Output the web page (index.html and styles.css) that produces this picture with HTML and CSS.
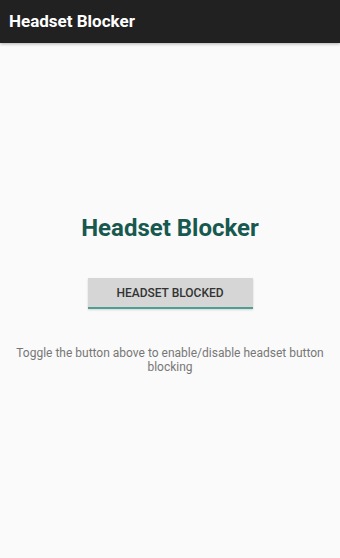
FILE: index.html
```html
<!DOCTYPE html>
<html>
<head>
<meta charset="utf-8">
<link rel="stylesheet" href="styles.css">
</head>
<body>
<header class="appbar"><span class="appbar-title">Headset Blocker</span></header>
<main class="content">
  <h1 class="heading">Headset Blocker</h1>
  <button class="toggle">HEADSET BLOCKED</button>
  <p class="hint">Toggle the button above to enable/disable headset button blocking</p>
</main>
</body>
</html>
```
FILE: styles.css
```css
html, body {
  margin: 0;
  padding: 0;
  background: #fafafa;
  font-family: Roboto, "Liberation Sans", sans-serif;
}
.appbar {
  height: 43px;
  background: #212121;
  display: flex;
  align-items: center;
  padding-left: 9px;
  box-shadow: 0 1px 3px rgba(0,0,0,0.3);
}
.appbar-title {
  color: #ffffff;
  font-weight: bold;
  font-size: 17px;
  margin-top: -1px;
}
.content {
  display: flex;
  flex-direction: column;
  align-items: center;
  padding-top: 171px;
}
.heading {
  margin: 0;
  color: #17594f;
  font-size: 24px;
  font-weight: bold;
  line-height: 28px;
}
.toggle {
  margin-top: 36px;
  width: 165px;
  height: 31px;
  border: none;
  border-bottom: 2px solid #4e9e94;
  background: #d6d6d6;
  color: #333333;
  font-family: Roboto, "Liberation Sans", sans-serif;
  font-size: 12px;
  font-weight: 500;
  padding: 0;
  box-shadow: 0 1px 2px rgba(0,0,0,0.15);
}
.hint {
  margin: 37px 14px 0;
  color: #777777;
  font-size: 12px;
  line-height: 14px;
  text-align: center;
}
```
